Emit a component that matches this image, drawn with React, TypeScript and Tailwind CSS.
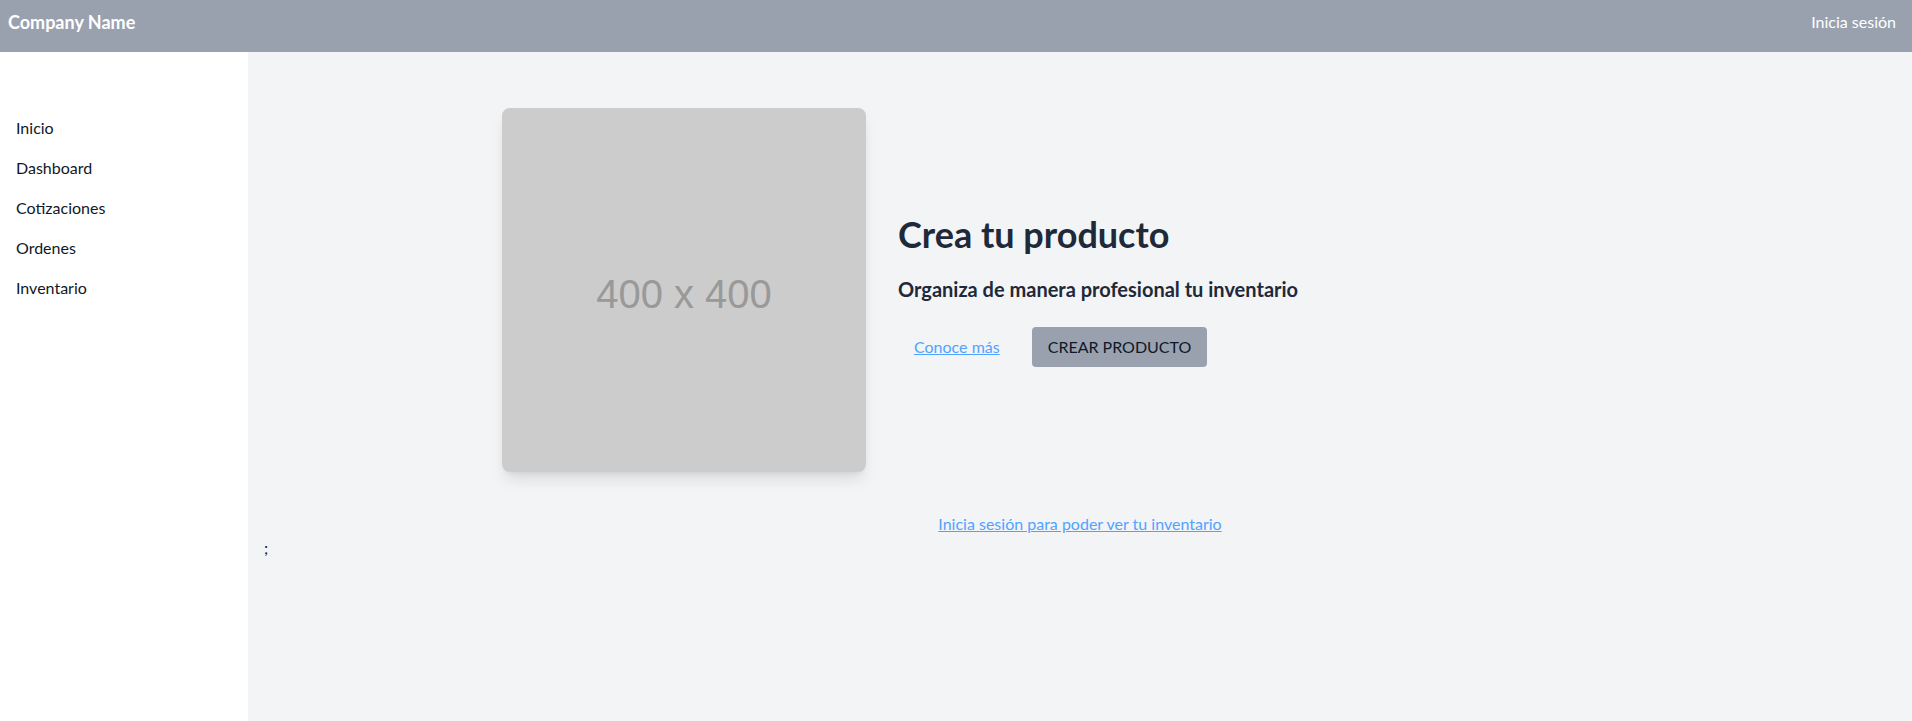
const navItems = ['Inicio', 'Dashboard', 'Cotizaciones', 'Ordenes', 'Inventario']

function Header() {
  return (
    <header className="flex h-[52px] items-center justify-between bg-gray-400 pl-2 pr-4 pb-2 text-white">
      <div className="text-lg font-bold">Company Name</div>
      <a className="text-base">Inicia sesión</a>
    </header>
  )
}

function Sidebar() {
  return (
    <aside className="w-[248px] shrink-0 bg-white pt-14">
      <ul>
        {navItems.map((item) => (
          <li key={item} className="px-4 py-2 text-base text-gray-900">
            {item}
          </li>
        ))}
      </ul>
    </aside>
  )
}

export default function App() {
  return (
    <div className="flex h-[721px] flex-col font-['Lato','Noto_Sans',sans-serif]">
      <Header />
      <div className="flex flex-1">
        <Sidebar />
        <main className="flex-1 bg-gray-100 px-4 pt-14">
          {/* Hero */}
          <section className="mx-auto flex max-w-[1156px] items-center">
            <div className="flex h-[364px] w-[364px] shrink-0 items-center justify-center rounded-lg bg-[#cccccc] pt-2 shadow-lg">
              <span className="font-['Liberation_Sans',sans-serif] text-[40px] text-[#999999]">400 x 400</span>
            </div>
            <div className="ml-8 flex flex-col">
              <h1 className="text-4xl font-bold text-gray-800">Crea tu producto</h1>
              <h2 className="mt-[21px] text-xl font-bold text-gray-800">Organiza de manera profesional tu inventario</h2>
              <div className="mt-6 flex items-center">
                <a className="px-4 py-2 text-base text-blue-400 underline">Conoce más</a>
                <button className="ml-4 rounded bg-gray-400 px-4 py-2 text-base text-gray-900">CREAR PRODUCTO</button>
              </div>
            </div>
          </section>
          <div className="mt-10 text-center">
            <a className="text-base text-blue-400 underline">Inicia sesión para poder ver tu inventario</a>
          </div>
          <p className="text-base text-gray-900">;</p>
        </main>
      </div>
    </div>
  )
}
